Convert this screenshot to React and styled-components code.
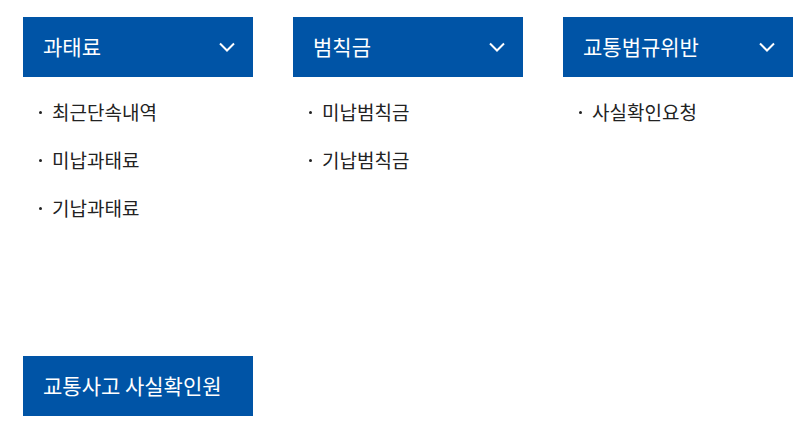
import React from 'react'
import styled, { createGlobalStyle } from 'styled-components'

const GlobalStyle = createGlobalStyle`
    body {
        margin: 0;
        background: #fff;
        font-family: "Noto Sans CJK KR", "Noto Sans", sans-serif;
    }
`

const Page = styled.div`
    padding: 17px 0 0 23px;
`

const Columns = styled.div`
    display: grid;
    grid-template-columns: repeat(3, 230px);
    column-gap: 40px;
    height: 339px;
`

const Header = styled.div`
    height: 60px;
    background-color: #0054a6;
    color: #fff;
    display: flex;
    align-items: center;
    justify-content: space-between;
    padding: 0 18px 2px 20px;
    box-sizing: border-box;
    font-size: 21px;
    cursor: pointer;
`

const List = styled.ul`
    list-style: none;
    margin: 0;
    padding: 10px 0 0 16px;
`

const Item = styled.li`
    display: flex;
    align-items: center;
    height: 48px;
    font-size: 19px;
    color: #222;

    &::before {
        content: '';
        width: 3px;
        height: 3px;
        border-radius: 50%;
        background: #222;
        margin-right: 10px;
        margin-top: 2px;
    }
`

const Chevron = () => (
    <svg width="16" height="10" viewBox="0 0 16 10" fill="none" style={{ marginTop: 2 }}>
        <path d="M1 1.5l7 7 7-7" stroke="#fff" strokeWidth="2" />
    </svg>
)

const menus = [
    { title: '과태료', items: ['최근단속내역', '미납과태료', '기납과태료'] },
    { title: '범칙금', items: ['미납범칙금', '기납범칙금'] },
    { title: '교통법규위반', items: ['사실확인요청'] },
]

const Single = styled(Header)`
    width: 230px;
`

const App = () => (
    <Page>
        <GlobalStyle />
        <Columns>
            {menus.map(m => (
                <div key={m.title}>
                    <Header>
                        <span>{m.title}</span>
                        <Chevron />
                    </Header>
                    <List>
                        {m.items.map(i => <Item key={i}>{i}</Item>)}
                    </List>
                </div>
            ))}
        </Columns>
        <Single>교통사고 사실확인원</Single>
    </Page>
)

export default App
